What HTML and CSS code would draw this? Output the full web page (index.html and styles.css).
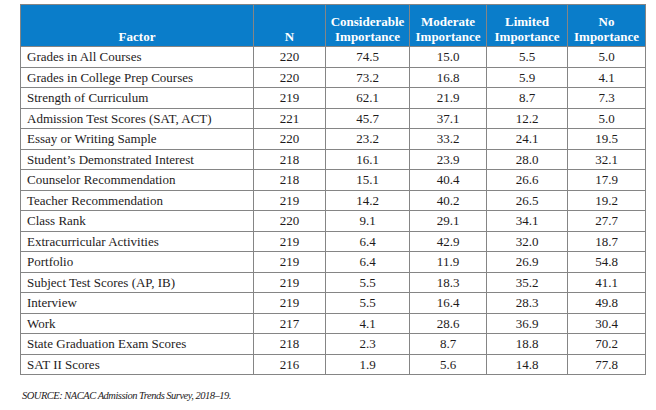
FILE: index.html
```html
<!DOCTYPE html>
<html>
<head>
<meta charset="utf-8">
<link rel="stylesheet" href="styles.css">
</head>
<body>
<div class="page">
<table class="factors">
  <colgroup>
    <col class="c-factor"><col class="c-n"><col class="c-cons"><col class="c-mod"><col class="c-lim"><col class="c-no">
  </colgroup>
  <thead>
    <tr>
      <th>Factor</th>
      <th>N</th>
      <th>Considerable<br>Importance</th>
      <th>Moderate<br>Importance</th>
      <th>Limited<br>Importance</th>
      <th>No<br>Importance</th>
    </tr>
  </thead>
  <tbody>
    <tr><td>Grades in All Courses</td><td>220</td><td>74.5</td><td>15.0</td><td>5.5</td><td>5.0</td></tr>
    <tr><td>Grades in College Prep Courses</td><td>220</td><td>73.2</td><td>16.8</td><td>5.9</td><td>4.1</td></tr>
    <tr><td>Strength of Curriculum</td><td>219</td><td>62.1</td><td>21.9</td><td>8.7</td><td>7.3</td></tr>
    <tr><td>Admission Test Scores (SAT, ACT)</td><td>221</td><td>45.7</td><td>37.1</td><td>12.2</td><td>5.0</td></tr>
    <tr><td>Essay or Writing Sample</td><td>220</td><td>23.2</td><td>33.2</td><td>24.1</td><td>19.5</td></tr>
    <tr><td>Student’s Demonstrated Interest</td><td>218</td><td>16.1</td><td>23.9</td><td>28.0</td><td>32.1</td></tr>
    <tr><td>Counselor Recommendation</td><td>218</td><td>15.1</td><td>40.4</td><td>26.6</td><td>17.9</td></tr>
    <tr><td>Teacher Recommendation</td><td>219</td><td>14.2</td><td>40.2</td><td>26.5</td><td>19.2</td></tr>
    <tr><td>Class Rank</td><td>220</td><td>9.1</td><td>29.1</td><td>34.1</td><td>27.7</td></tr>
    <tr><td>Extracurricular Activities</td><td>219</td><td>6.4</td><td>42.9</td><td>32.0</td><td>18.7</td></tr>
    <tr><td>Portfolio</td><td>219</td><td>6.4</td><td>11.9</td><td>26.9</td><td>54.8</td></tr>
    <tr><td>Subject Test Scores (AP, IB)</td><td>219</td><td>5.5</td><td>18.3</td><td>35.2</td><td>41.1</td></tr>
    <tr><td>Interview</td><td>219</td><td>5.5</td><td>16.4</td><td>28.3</td><td>49.8</td></tr>
    <tr><td>Work</td><td>217</td><td>4.1</td><td>28.6</td><td>36.9</td><td>30.4</td></tr>
    <tr><td>State Graduation Exam Scores</td><td>218</td><td>2.3</td><td>8.7</td><td>18.8</td><td>70.2</td></tr>
    <tr><td>SAT II Scores</td><td>216</td><td>1.9</td><td>5.6</td><td>14.8</td><td>77.8</td></tr>
  </tbody>
</table>
<p class="source">SOURCE: NACAC Admission Trends Survey, 2018–19.</p>
</div>
</body>
</html>
```
FILE: styles.css
```css
html, body {
  margin: 0;
  padding: 0;
  background: #ffffff;
}
.page {
  padding: 4px 0 0 20px;
  font-family: "Liberation Serif", "Times New Roman", serif;
  color: #1e1b1c;
}
.factors {
  border-collapse: collapse;
  table-layout: fixed;
  width: 625px;
  font-size: 13px;
}
.c-factor { width: 233px; }
.c-n { width: 72px; }
.c-cons { width: 84px; }
.c-mod { width: 77px; }
.c-lim { width: 81px; }
.c-no { width: 78px; }
.factors th, .factors td {
  border: 1px solid #858585;
  padding: 0;
  text-align: center;
}
.factors th {
  background: #0a7dca;
  color: #ffffff;
  font-weight: bold;
  vertical-align: bottom;
  line-height: 15px;
  height: 39px;
  padding-bottom: 2px;
}
.factors td {
  line-height: 19.5px;
  white-space: nowrap;
}
.factors td:first-child {
  text-align: left;
  padding-left: 6px;
}
.source {
  margin: 15px 0 0 2px;
  font-style: italic;
  font-size: 10.5px;
  letter-spacing: -0.5px;
}
```
